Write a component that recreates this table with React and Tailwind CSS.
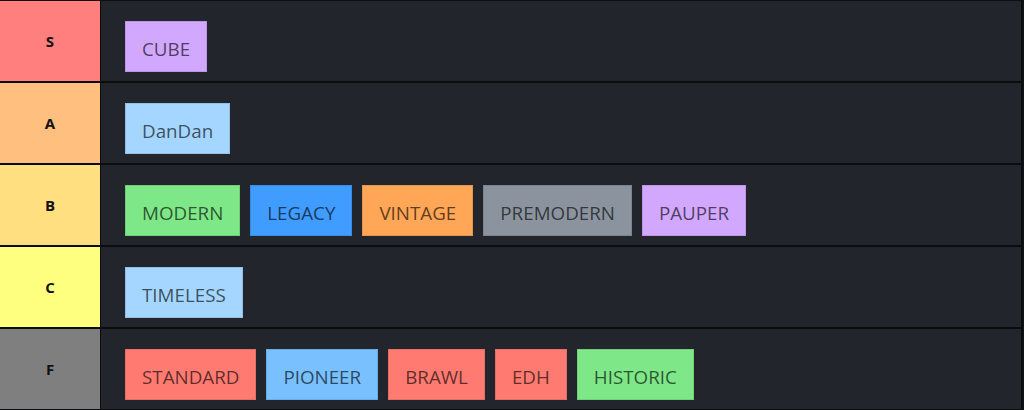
import React from 'react';

const tiers = [
    { label: 'S', color: 'bg-[#ff7f7f]', items: [{ name: 'CUBE', color: 'bg-[#d2a8ff]' }] },
    { label: 'A', color: 'bg-[#ffbf7f]', items: [{ name: 'DanDan', color: 'bg-[#a5d6ff]' }] },
    {
        label: 'B',
        color: 'bg-[#ffdf7f]',
        items: [
            { name: 'MODERN', color: 'bg-[#7ee787]' },
            { name: 'LEGACY', color: 'bg-[#409cff]' },
            { name: 'VINTAGE', color: 'bg-[#ffa657]' },
            { name: 'PREMODERN', color: 'bg-[#8b949e]' },
            { name: 'PAUPER', color: 'bg-[#d2a8ff]' },
        ],
    },
    { label: 'C', color: 'bg-[#ffff7f]', items: [{ name: 'TIMELESS', color: 'bg-[#a5d6ff]' }] },
    {
        label: 'F',
        color: 'bg-[#7f7f7f]',
        items: [
            { name: 'STANDARD', color: 'bg-[#ff7b72]' },
            { name: 'PIONEER', color: 'bg-[#79c0ff]' },
            { name: 'BRAWL', color: 'bg-[#ff7b72]' },
            { name: 'EDH', color: 'bg-[#ff7b72]' },
            { name: 'HISTORIC', color: 'bg-[#7ee787]' },
        ],
    },
];

export default function App() {
    return (
        <div className="w-[1024px] h-[410px] overflow-hidden bg-[#111317] border-t border-[#0d0e10] font-['Open_Sans',sans-serif]">
            {tiers.map((tier) => (
                <div key={tier.label} className="flex h-[82px] border-b-2 border-[#0b0c0e] mr-[1px]">
                    <div className={`w-[101px] shrink-0 flex items-center justify-center ${tier.color} border-r border-[#0b0c0e]`}>
                        <span className="text-[15px] font-bold text-[#111]">{tier.label}</span>
                    </div>
                    <div className="flex-1 flex items-start gap-[10px] pl-6 pt-5 bg-[#22252c] border-r-2 border-[#0b0c0e]">
                        {tier.items.map((item) => (
                            <div
                                key={item.name}
                                className={`${item.color} h-[51px] px-4 border border-black/10 flex items-center pt-[6px] text-[18.8px] leading-[27px] text-black/65`}
                            >
                                {item.name}
                            </div>
                        ))}
                    </div>
                </div>
            ))}
        </div>
    );
}
